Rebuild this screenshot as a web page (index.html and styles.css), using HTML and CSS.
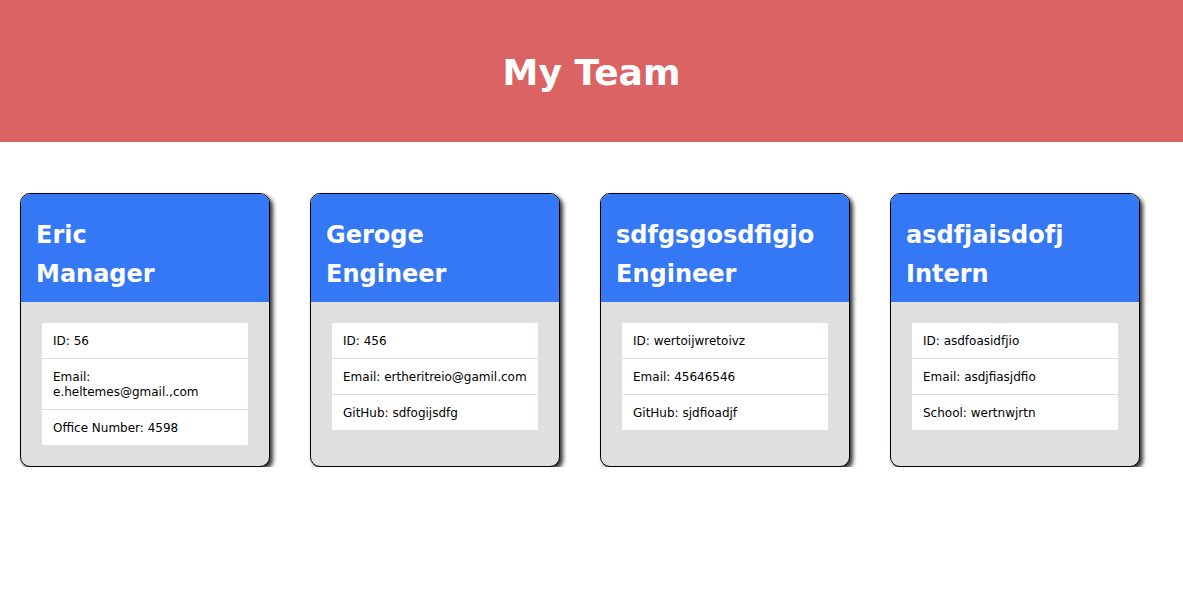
FILE: index.html
```html
<!DOCTYPE html>
<html>
<head>
<meta charset="utf-8">
<title>My Team</title>
<link rel="stylesheet" href="styles.css">
</head>
<body>
<header class="banner"><h1 class="banner-title">My Team</h1></header>
<main class="team">
  <section class="card">
    <div class="card-head"><h2 class="card-title">Eric<br>Manager</h2></div>
    <div class="card-body">
      <ul class="info">
        <li class="info-item">ID: 56</li>
        <li class="info-item">Email:<br>e.heltemes@gmail.,com</li>
        <li class="info-item">Office Number: 4598</li>
      </ul>
    </div>
  </section>
  <section class="card">
    <div class="card-head"><h2 class="card-title">Geroge<br>Engineer</h2></div>
    <div class="card-body">
      <ul class="info">
        <li class="info-item">ID: 456</li>
        <li class="info-item">Email: ertheritreio@gamil.com</li>
        <li class="info-item">GitHub: sdfogijsdfg</li>
      </ul>
    </div>
  </section>
  <section class="card">
    <div class="card-head"><h2 class="card-title">sdfgsgosdfigjo<br>Engineer</h2></div>
    <div class="card-body">
      <ul class="info">
        <li class="info-item">ID: wertoijwretoivz</li>
        <li class="info-item">Email: 45646546</li>
        <li class="info-item">GitHub: sjdfioadjf</li>
      </ul>
    </div>
  </section>
  <section class="card">
    <div class="card-head"><h2 class="card-title">asdfjaisdofj<br>Intern</h2></div>
    <div class="card-body">
      <ul class="info">
        <li class="info-item">ID: asdfoasidfjio</li>
        <li class="info-item">Email: asdjfiasjdfio</li>
        <li class="info-item">School: wertnwjrtn</li>
      </ul>
    </div>
  </section>
</main>
</body>
</html>
```

FILE: styles.css
```css
* { box-sizing: border-box; }
body {
  margin: 0;
  font-family: "DejaVu Sans", Verdana, sans-serif;
  background: #fff;
  color: #000;
}
.banner {
  background: #db6363;
  height: 142px;
  display: flex;
  align-items: center;
  justify-content: center;
}
.banner-title {
  margin: 0;
  color: #fff;
  font-size: 36px;
  font-weight: bold;
  line-height: 1;
  padding-top: 3px;
}
.team {
  display: flex;
  align-items: stretch;
  gap: 40px;
  padding: 51px 20px 0 20px;
}
.card {
  width: 250px;
  border: 1px solid #000;
  border-radius: 10px;
  overflow: hidden;
  background: #e0dedf;
  box-shadow: 3px 3px 4px #333;
  display: flex;
  flex-direction: column;
}
.card-head {
  background: #3578f5;
  padding: 22px 15px 8px;
}
.card-title {
  margin: 0;
  color: #fff;
  font-size: 24px;
  font-weight: bold;
  line-height: 39px;
}
.card-body {
  padding: 21px;
  flex: 1;
}
.info {
  list-style: none;
  margin: 0;
  padding: 0;
  background: #fff;
}
.info-item {
  font-size: 12px;
  line-height: 15px;
  padding: 11px 11px 9px;
  border-top: 1px solid #dedede;
}
.info-item:first-child { border-top: none; }
```
